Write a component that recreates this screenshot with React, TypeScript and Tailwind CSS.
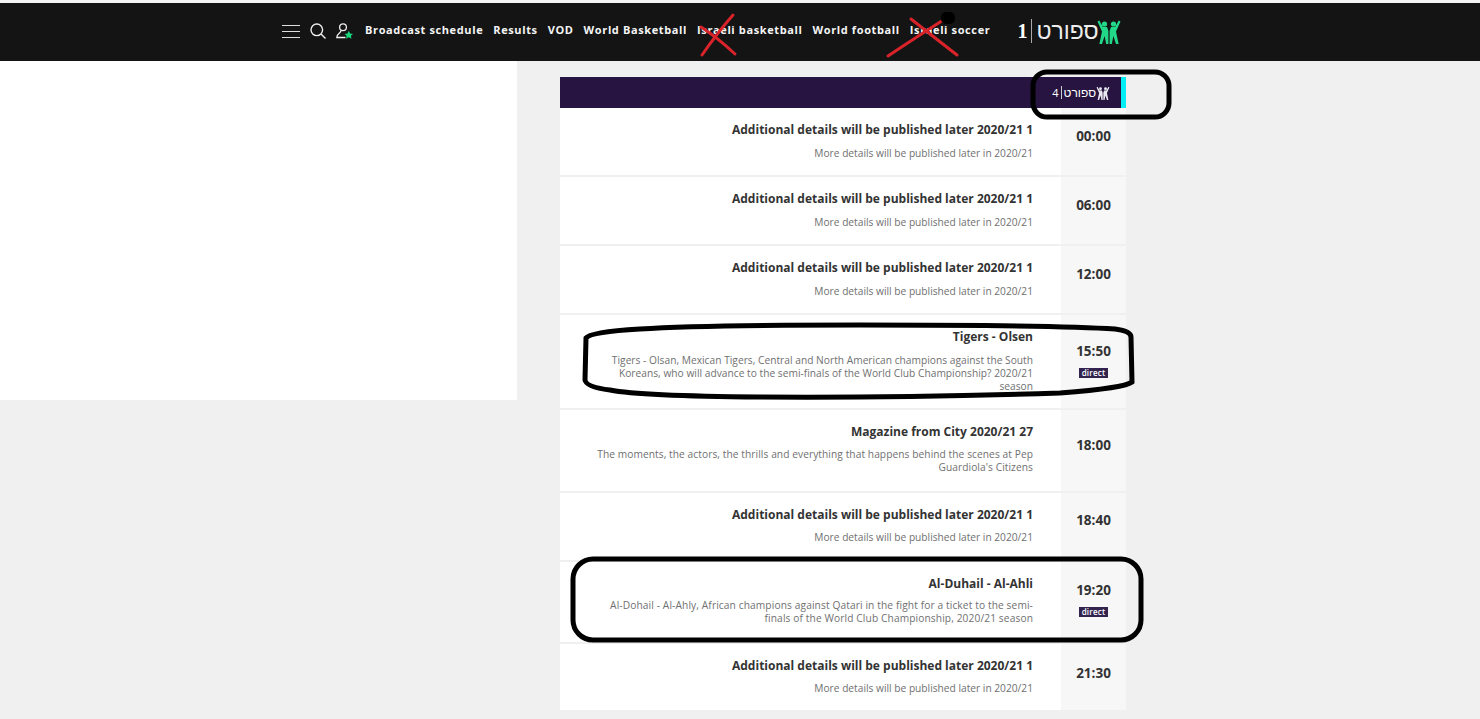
const NAV = [
  "Broadcast schedule",
  "Results",
  "VOD",
  "World Basketball",
  "Israeli basketball",
  "World football",
  "Israeli soccer",
];

const PLACEHOLDER_TITLE = "Additional details will be published later 2020/21 1";
const PLACEHOLDER_DESC = "More details will be published later in 2020/21";

type Row = {
  time: string;
  title: string;
  desc: string[];
  live?: boolean;
  height: string;
  descTop: string;
  timeTop: string;
};

const ROWS: Row[] = [
  { time: "00:00", title: PLACEHOLDER_TITLE, desc: [PLACEHOLDER_DESC], height: "h-[67px]", descTop: "mt-[9px]", timeTop: "pt-[19px]" },
  { time: "06:00", title: PLACEHOLDER_TITLE, desc: [PLACEHOLDER_DESC], height: "h-[67px]", descTop: "mt-[9px]", timeTop: "pt-[19px]" },
  { time: "12:00", title: PLACEHOLDER_TITLE, desc: [PLACEHOLDER_DESC], height: "h-[67px]", descTop: "mt-[9px]", timeTop: "pt-[19px]" },
  {
    time: "15:50",
    title: "Tigers - Olsen",
    desc: [
      "Tigers - Olsan, Mexican Tigers, Central and North American champions against the South",
      "Koreans, who will advance to the semi-finals of the World Club Championship? 2020/21",
      "season",
    ],
    live: true,
    height: "h-[93px]",
    descTop: "mt-[9px] tracking-[0.02px]",
    timeTop: "pt-[27px]",
  },
  {
    time: "18:00",
    title: "Magazine from City 2020/21 27",
    desc: [
      "The moments, the actors, the thrills and everything that happens behind the scenes at Pep",
      "Guardiola's Citizens",
    ],
    height: "h-[81px]",
    descTop: "mt-[8px] tracking-[0.07px]",
    timeTop: "pt-[26px]",
  },
  { time: "18:40", title: PLACEHOLDER_TITLE, desc: [PLACEHOLDER_DESC], height: "h-[67px]", descTop: "mt-[8px]", timeTop: "pt-[18px]" },
  {
    time: "19:20",
    title: "Al-Duhail - Al-Ahli",
    desc: [
      "Al-Dohail - Al-Ahly, African champions against Qatari in the fight for a ticket to the semi-",
      "finals of the World Club Championship, 2020/21 season",
    ],
    live: true,
    height: "h-[80px]",
    descTop: "mt-[7px] tracking-[0.11px]",
    timeTop: "pt-[19px]",
  },
  { time: "21:30", title: PLACEHOLDER_TITLE, desc: [PLACEHOLDER_DESC], height: "h-[66px]", descTop: "mt-[8px]", timeTop: "pt-[20px]" },
];

// two figures with raised arms, the sport channel mark
function Figures({ color, className }: { color: string; className: string }) {
  return (
    <svg viewBox="0 0 24 25" className={className} fill={color}>
      <circle cx="7.5" cy="5" r="2.6" />
      <circle cx="16.5" cy="5" r="2.6" />
      <path d="M0.5 2.5 L2.2 1.5 L6 8 L10 8 L11.4 12 L11.4 25 L9.2 25 L7.6 17 L5 25 L2.4 25 L5 12.5 Z" />
      <path d="M23.5 2.5 L21.8 1.5 L18 8 L14 8 L12.6 12 L12.6 25 L14.8 25 L16.4 17 L19 25 L21.6 25 L19 12.5 Z" />
    </svg>
  );
}

function RowItem({ row }: { row: Row }) {
  return (
    <div className={`flex bg-white ${row.height}`}>
      <div className="flex-1 pt-[14px] pr-[28px] text-right">
        <div className="text-[12px] leading-[16px] font-bold text-[#333333]">{row.title}</div>
        <div className={`text-[10.2px] leading-[13px] text-[#707070] ${row.descTop}`}>
          {row.desc.map((line) => (
            <div key={line}>{line}</div>
          ))}
        </div>
      </div>
      <div className={`flex w-[65px] flex-col items-center bg-[#f7f7f7] ${row.timeTop}`}>
        <div className="text-[13.5px] leading-[18px] font-bold text-[#333333]">{row.time}</div>
        {row.live && (
          <div className="mt-[8px] bg-[#33244f] px-[3px] text-[8px] leading-[10px] font-semibold tracking-[0.2px] text-white">
            direct
          </div>
        )}
      </div>
    </div>
  );
}

export default function App() {
  return (
    <div className="relative h-[719px] overflow-hidden bg-[#f0f0f0] font-['Open_Sans',sans-serif]">
      <div className="h-[3px] bg-[#f4f4f4]" />
      <header className="flex h-[58px] items-center bg-[#141414] pb-[2px] pl-[282px]">
        <div className="flex flex-col gap-[5px]">
          <span className="h-px w-[18px] bg-[#dddddd]" />
          <span className="h-px w-[18px] bg-[#dddddd]" />
          <span className="h-px w-[18px] bg-[#dddddd]" />
        </div>
        <svg viewBox="0 0 16 16" className="ml-[10px] h-[16px] w-[16px]" fill="none" stroke="#eeeeee" strokeWidth="1.4">
          <circle cx="6.8" cy="6.8" r="5.8" />
          <path d="M11 11 L15.5 15.5" />
        </svg>
        <svg viewBox="0 0 17 16" className="ml-[10px] h-[16px] w-[17px]" fill="none" stroke="#eeeeee" strokeWidth="1.3">
          <circle cx="7" cy="4.2" r="3.4" />
          <path d="M5 7.6 C5 10.4 1 10.4 0.8 14.5 L9.5 14.5" />
          <path d="M12.8 7.8 L14.1 10.6 L17 10.9 L14.9 12.8 L15.5 15.8 L12.8 14.3 L10.1 15.8 L10.7 12.8 L8.6 10.9 L11.5 10.6 Z" fill="#16d97c" stroke="none" />
        </svg>
        <nav className="mb-[2px] ml-[12px] flex gap-[10px]">
          {NAV.map((item) => (
            <span key={item} className="text-[11px] font-bold tracking-[0.62px] whitespace-nowrap text-[#f5f5f5]">
              {item}
            </span>
          ))}
        </nav>
        <div className="ml-[27px] flex items-center">
          <span className="text-[20px] leading-none font-bold font-['Liberation_Serif',serif] text-white">1</span>
          <span className="mx-[4px] h-[24px] w-px bg-[#aaaaaa]" />
          <span dir="rtl" className="text-[23px] leading-none font-['Liberation_Sans',sans-serif] text-[#eeeeee]">
            ספורט
          </span>
          <Figures color="#22d98a" className="-ml-[2px] h-[25px] w-[24px]" />
        </div>
      </header>

      <div className="flex items-start">
        <div className="h-[339px] w-[517px] bg-white" />
        <main className="mt-[16px] ml-[43px] w-[566px]">
          <div className="flex h-[31px] items-center justify-end bg-[#271440]">
            <div className="flex items-center pr-[11px]">
              <span className="text-[11px] leading-none text-white">4</span>
              <span className="mx-[2px] h-[13px] w-px bg-[#cccccc]" />
              <span dir="rtl" className="text-[12px] leading-none font-['Liberation_Sans',sans-serif] text-white">
                ספורט
              </span>
              <Figures color="#e8e8f0" className="h-[14px] w-[14px]" />
            </div>
            <div className="h-full w-[5px] bg-[#00f0f5]" />
          </div>
          <div className="flex flex-col gap-[2px]">
            {ROWS.map((row) => (
              <RowItem key={row.time} row={row} />
            ))}
          </div>
        </main>
      </div>

      {/* marker scribbles drawn on top of the screenshot */}
      <svg viewBox="0 0 1480 719" className="pointer-events-none absolute top-0 left-0 h-[719px] w-[1480px]" fill="none">
        <g stroke="#d8232a" strokeWidth="3" strokeLinecap="round">
          <path d="M733 15 Q718 32 702 55" />
          <path d="M701 27 Q718 38 735 54" />
          <path d="M948 17 Q915 38 888 56" />
          <path d="M911 19 Q935 38 957 55" />
        </g>
        <rect x="941" y="12" width="14" height="12" rx="5" fill="#000000" />
        <g stroke="#000000" strokeWidth="5">
          <rect x="1033" y="72" width="136" height="45" rx="14" />
          <path d="M586 338 Q590 332 640 329 Q700 325 860 325 Q1060 325 1115 329 Q1131 331 1131 337 L1132 382 Q1125 388 1060 393 Q900 398 760 397 Q640 396 610 390 Q586 387 585 380 Z" />
          <rect x="573" y="559" width="568" height="81" rx="20" />
        </g>
      </svg>
    </div>
  );
}
